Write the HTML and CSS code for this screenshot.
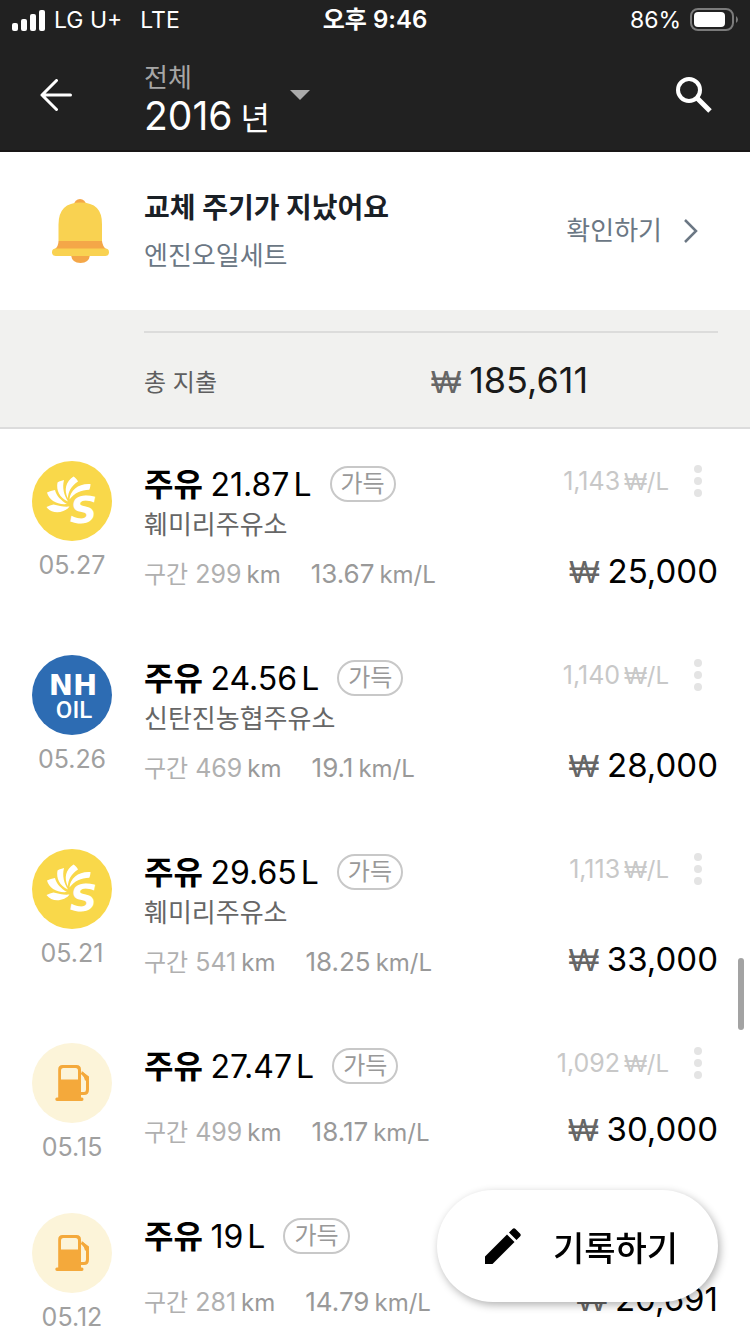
FILE: index.html
```html
<!DOCTYPE html>
<html lang="ko">
<head>
  <meta charset="UTF-8">
  <meta name="viewport" content="width=device-width, initial-scale=1.0">
  <title>2016년 주유 기록</title>
  <link rel="stylesheet" href="styles.css">
</head>
<body>
  <svg class="symbols" aria-hidden="true">
    <symbol id="logo-sk" viewBox="0 0 80 80">
      <circle cx="40" cy="40" r="40" fill="#f9d84a"/>
      <g fill="#fff">
        <path d="M14.500 46C17 45 19 44 21.500 43.500C27 45 32 46 37.500 45.500C33 52 20 54 14.500 46Z"/>
        <path d="M15 31.500C17.500 30.500 20 29.500 23 29C24.500 35 29 39.500 35 43C25 44 17 39 15 31.500Z"/>
        <path d="M25.500 21.500C27.500 20 30 19.500 32 19C30 27 32 34 36 40.500C27.500 37 24 29 25.500 21.500Z"/>
        <path d="M41.500 15.500C43.500 16.500 45 18.500 46 20.500C39 25 36 31 36 37.500C31.500 29 34 20 41.500 15.500Z"/>
        <path d="M58.500 23C58.500 25 58 27 57.300 28.800C49 29 42.500 32 37.500 38.500C38 29 47 22 58.500 23Z"/>
      </g>
    </symbol>
    <symbol id="logo-pump" viewBox="0 0 80 80">
      <circle cx="40" cy="40" r="40" fill="#fcf4d9"/>
      <path d="M30.500 22H44.500Q49 22 49 26.500V54.500H50Q51.500 54.500 51.500 56.200T50 58H25Q23.300 58 23.300 56.200T25 54.500H26.200V26.500Q26.200 22 30.500 22Z" fill="#f4a93b"/>
      <path d="M31.500 25H43.500Q46 25 46 27.500V36.500H29V27.500Q29 25 31.500 25Z" fill="#fcf4d9"/>
      <path d="M49.500 29.500L54 34Q55.500 35.500 55.500 38V46.500Q55.500 50.500 52 50.500H49" fill="none" stroke="#f4a93b" stroke-width="3"/>
      <path d="M49.500 28L57 33.500V37.500H53L51.500 33Z" fill="#f4a93b"/>
    </symbol>
    <symbol id="icon-dots" viewBox="0 0 8 32">
      <circle cx="4" cy="4" r="4"/><circle cx="4" cy="16" r="4"/><circle cx="4" cy="28" r="4"/>
    </symbol>
  </svg>

  <div class="status-bar">
    <div class="carrier">
      <svg width="33" height="21" viewBox="0 0 33 21" fill="#fff" aria-hidden="true">
        <rect x="0" y="13" width="6" height="8" rx="2"/>
        <rect x="9" y="9" width="6" height="12" rx="2"/>
        <rect x="18" y="4" width="6" height="17" rx="2"/>
        <rect x="27" y="0" width="6" height="21" rx="2"/>
      </svg>
      <span>LG U+</span>
      <span class="network">LTE</span>
    </div>
    <div class="clock">오후 9:46</div>
    <div class="battery">
      <span>86%</span>
      <svg width="48" height="24" viewBox="0 0 48 24" aria-hidden="true">
        <rect x="1" y="1" width="42" height="21" rx="7" fill="none" stroke="#7b7b7b" stroke-width="2"/>
        <rect x="4" y="4" width="31" height="15" rx="4" fill="#fff"/>
        <path d="M46 8Q48 9.500 48 11.500T46 15Z" fill="#7b7b7b"/>
      </svg>
    </div>
  </div>

  <header class="app-bar">
    <button class="icon-btn" aria-label="뒤로">
      <svg width="32" height="32" viewBox="0 0 32 32" fill="none" stroke="#fff" stroke-width="3" stroke-linecap="round" stroke-linejoin="round">
        <path d="M16.500 1.500L2 16L16.500 30.500M2 16H30.500"/>
      </svg>
    </button>
    <button class="period">
      <span class="period-text">
        <span class="period-label">전체</span>
        <span class="period-year">2016<span class="year-unit">년</span></span>
      </span>
      <svg width="20" height="10" viewBox="0 0 20 10"><path d="M0 0H20L10 10Z" fill="#aaa"/></svg>
    </button>
    <button class="icon-btn search" aria-label="검색">
      <svg width="36" height="36" viewBox="0 0 36 36" fill="none" stroke="#fff">
        <circle cx="13" cy="13" r="11" stroke-width="4"/>
        <path d="M21 21L34 34" stroke-width="5"/>
      </svg>
    </button>
  </header>

  <section class="alert">
    <svg class="bell" width="57" height="66" viewBox="0 0 57 66" aria-hidden="true">
      <circle cx="28" cy="7" r="6" fill="#f4a748"/>
      <path d="M19 57H38Q37 65 28.500 65T19 57Z" fill="#f4a748"/>
      <path d="M6.500 26.500Q6.500 4.500 28.500 4.500T50 26.500V43H6.500Z" fill="#f9d251"/>
      <path d="M6.500 43H50Q50.500 48 54 51H3Q6.500 48 6.500 43Z" fill="#f4a748"/>
      <rect x="0" y="50.500" width="57" height="7.500" rx="3.700" fill="#f9d251"/>
    </svg>
    <div class="alert-text">
      <h2>교체 주기가 지났어요</h2>
      <p>엔진오일세트</p>
    </div>
    <a class="alert-link" href="#">확인하기
      <svg width="14" height="24" viewBox="0 0 14 24" fill="none" stroke="#6b7784" stroke-width="2.500"><path d="M1 1L12 12L1 23"/></svg>
    </a>
  </section>

  <section class="total">
    <div class="total-row">
      <span class="total-label">총 지출</span>
      <span class="total-amount"><span class="won">₩</span>185,611</span>
    </div>
  </section>

  <main class="records">
    <article class="record">
      <div class="side">
        <svg class="logo" viewBox="0 0 80 80" role="img" aria-label="SK"><use href="#logo-sk"/><text class="sk-mark" x="38" y="62">S</text></svg>
        <time datetime="2016-05-27">05.27</time>
      </div>
      <div class="detail">
        <div class="top">
          <h3>주유 <span class="volume">21.87<span class="liter">L</span></span></h3>
          <span class="full">가득</span>
          <div class="top-right">
            <span class="unit-price">1,143<span class="per"><span class="won-sign">₩</span>/L</span></span>
            <button class="more" aria-label="더보기"><svg width="8" height="32"><use href="#icon-dots"/></svg></button>
          </div>
        </div>
        <p class="station">훼미리주유소</p>
        <div class="bottom">
          <span class="distance"><span class="label">구간</span> 299<span class="unit">km</span></span>
          <span class="economy">13.67<span class="unit">km/L</span></span>
          <span class="price"><span class="won">₩</span>25,000</span>
        </div>
      </div>
    </article>

    <article class="record">
      <div class="side">
        <svg class="logo" viewBox="0 0 80 80" role="img" aria-label="NH OIL">
          <circle cx="40" cy="40" r="40" fill="#2d6cb3"/>
          <text class="nh-mark" x="41" y="40">NH</text>
          <text class="nh-oil" x="42" y="63">OIL</text>
        </svg>
        <time datetime="2016-05-26">05.26</time>
      </div>
      <div class="detail">
        <div class="top">
          <h3>주유 <span class="volume">24.56<span class="liter">L</span></span></h3>
          <span class="full">가득</span>
          <div class="top-right">
            <span class="unit-price">1,140<span class="per"><span class="won-sign">₩</span>/L</span></span>
            <button class="more" aria-label="더보기"><svg width="8" height="32"><use href="#icon-dots"/></svg></button>
          </div>
        </div>
        <p class="station">신탄진농협주유소</p>
        <div class="bottom">
          <span class="distance"><span class="label">구간</span> 469<span class="unit">km</span></span>
          <span class="economy">19.1<span class="unit">km/L</span></span>
          <span class="price"><span class="won">₩</span>28,000</span>
        </div>
      </div>
    </article>

    <article class="record">
      <div class="side">
        <svg class="logo" viewBox="0 0 80 80" role="img" aria-label="SK"><use href="#logo-sk"/><text class="sk-mark" x="38" y="62">S</text></svg>
        <time datetime="2016-05-21">05.21</time>
      </div>
      <div class="detail">
        <div class="top">
          <h3>주유 <span class="volume">29.65<span class="liter">L</span></span></h3>
          <span class="full">가득</span>
          <div class="top-right">
            <span class="unit-price">1,113<span class="per"><span class="won-sign">₩</span>/L</span></span>
            <button class="more" aria-label="더보기"><svg width="8" height="32"><use href="#icon-dots"/></svg></button>
          </div>
        </div>
        <p class="station">훼미리주유소</p>
        <div class="bottom">
          <span class="distance"><span class="label">구간</span> 541<span class="unit">km</span></span>
          <span class="economy">18.25<span class="unit">km/L</span></span>
          <span class="price"><span class="won">₩</span>33,000</span>
        </div>
      </div>
    </article>

    <article class="record">
      <div class="side">
        <svg class="logo" role="img" aria-label="주유소"><use href="#logo-pump"/></svg>
        <time datetime="2016-05-15">05.15</time>
      </div>
      <div class="detail">
        <div class="top">
          <h3>주유 <span class="volume">27.47<span class="liter">L</span></span></h3>
          <span class="full">가득</span>
          <div class="top-right">
            <span class="unit-price">1,092<span class="per"><span class="won-sign">₩</span>/L</span></span>
            <button class="more" aria-label="더보기"><svg width="8" height="32"><use href="#icon-dots"/></svg></button>
          </div>
        </div>
        <div class="bottom">
          <span class="distance"><span class="label">구간</span> 499<span class="unit">km</span></span>
          <span class="economy">18.17<span class="unit">km/L</span></span>
          <span class="price"><span class="won">₩</span>30,000</span>
        </div>
      </div>
    </article>

    <article class="record">
      <div class="side">
        <svg class="logo" role="img" aria-label="주유소"><use href="#logo-pump"/></svg>
        <time datetime="2016-05-12">05.12</time>
      </div>
      <div class="detail">
        <div class="top">
          <h3>주유 <span class="volume">19<span class="liter">L</span></span></h3>
          <span class="full">가득</span>
        </div>
        <div class="bottom">
          <span class="distance"><span class="label">구간</span> 281<span class="unit">km</span></span>
          <span class="economy">14.79<span class="unit">km/L</span></span>
          <span class="price"><span class="won">₩</span>20,691</span>
        </div>
      </div>
    </article>
  </main>

  <div class="scroll-thumb"></div>

  <button class="write-btn">
    <svg width="36" height="36" viewBox="0 0 36 36" aria-hidden="true">
      <path d="M0 28.500L22 6.500L29.500 14L7.500 36H0ZM24 4.500L27.500 1Q29 -.5 30.500 1L35 5.500Q36.500 7 35 8.500L31.500 12Z"/>
    </svg>
    기록하기
  </button>
</body>
</html>
```

FILE: styles.css
```css
* {
  box-sizing: border-box;
}
body {
  margin: 0;
  height: 100vh;
  display: flex;
  flex-direction: column;
  overflow: hidden;
  background: #fff;
  color: #000;
  font-family: Inter, "Noto Sans CJK KR", sans-serif;
  font-size: 26px;
}
h2, h3, p {
  margin: 0;
}
button {
  padding: 0;
  border: none;
  background: none;
  color: inherit;
  font: inherit;
  cursor: pointer;
}
svg {
  display: block;
  flex-shrink: 0;
}
.symbols {
  position: absolute;
  width: 0;
  height: 0;
}

/* Status bar */
.status-bar {
  display: grid;
  grid-template-columns: 1fr auto 1fr;
  align-items: center;
  flex-shrink: 0;
  height: 40px;
  padding: 0 12px;
  background: #212121;
  color: #fff;
  font-size: 23px;
}
.carrier, .battery {
  display: flex;
  align-items: center;
  gap: 9px;
}
.network {
  margin-left: 9px;
}
.clock {
  font-size: 24px;
  font-weight: 600;
  line-height: 36px;
}
.battery {
  justify-content: flex-end;
}

/* App bar */
.app-bar {
  display: flex;
  align-items: center;
  flex-shrink: 0;
  height: 112px;
  padding: 0 38px 0 40px;
  border-bottom: 2px solid #191617;
  background: #212121;
  color: #fff;
}
.icon-btn {
  width: 36px;
}
.period {
  display: flex;
  align-items: center;
  gap: 20px;
  margin-left: 68px;
  text-align: left;
}
.period-text {
  display: flex;
  flex-direction: column;
  padding-top: 12px;
}
.period-label {
  color: #a6a6a6;
  font-size: 26px;
  line-height: 32px;
}
.period-year {
  font-size: 39px;
  line-height: 44px;
}
.year-unit {
  margin-left: 8px;
  font-size: 32px;
}
.search {
  margin-left: auto;
}

/* Replacement alert */
.alert {
  display: flex;
  align-items: center;
  flex-shrink: 0;
  height: 158px;
  padding: 0 52px;
  color: #6b7784;
}
.alert-text {
  margin-left: 35px;
  padding-top: 2px;
}
.alert-text h2 {
  color: #1a2026;
  font-size: 28px;
  font-weight: 700;
  line-height: 48px;
}
.alert-text p {
  line-height: 48px;
}
.alert-link {
  display: flex;
  align-items: center;
  gap: 22px;
  margin-left: auto;
  color: inherit;
  line-height: 36px;
  text-decoration: none;
}

/* Total */
.total {
  flex-shrink: 0;
  padding: 21px 32px 0 144px;
  border-bottom: 2px solid #dcdcdc;
  background: #f1f1ef;
}
.total-row {
  display: grid;
  grid-template-columns: 1fr 1fr;
  align-items: center;
  height: 96px;
  border-top: 2px solid #dcdcdb;
}
.total-label {
  color: #5f5f5f;
  font-size: 24px;
}
.total-amount {
  color: #1a1a1a;
  font-size: 36px;
}
.won, .won-sign {
  font-family: "Liberation Sans", Arial, sans-serif;
}
.won {
  margin-right: 8px;
  color: #666;
  font-size: 32px;
}

/* Records */
.records {
  flex: 1;
  min-height: 0;
  overflow-y: auto;
  scrollbar-width: none;
}
.record {
  display: flex;
  gap: 32px;
  padding: 32px 32px 18px;
}
.side {
  display: flex;
  flex-direction: column;
  align-items: center;
  gap: 8px;
  width: 80px;
}
.side time {
  color: #a0a0a0;
  font-size: 25px;
  line-height: 32px;
}
.logo {
  width: 80px;
  height: 80px;
}
.sk-mark {
  fill: #fff;
  font-family: "DejaVu Sans", sans-serif;
  font-size: 38px;
  font-style: italic;
  font-weight: 700;
}
.nh-mark, .nh-oil {
  fill: #fff;
  text-anchor: middle;
}
.nh-mark {
  font-family: "DejaVu Sans", sans-serif;
  font-size: 29px;
  font-weight: 700;
}
.nh-oil {
  font-family: Roboto, sans-serif;
  font-size: 24px;
  font-weight: 500;
}
.detail {
  flex: 1;
  padding-bottom: 14px;
}
.top {
  display: flex;
  align-items: center;
  height: 46px;
}
.top h3 {
  padding-bottom: 4px;
  font-size: 32px;
  font-weight: 700;
}
.volume {
  font-weight: 400;
}
.liter {
  margin-left: 4px;
}
.full {
  height: 36px;
  margin-left: 18px;
  padding: 0 9px;
  border: 2px solid #c8c8c8;
  border-radius: 18px;
  color: #999;
  font-size: 24px;
  line-height: 32px;
}
.top-right {
  display: flex;
  align-items: center;
  gap: 25px;
  margin-left: auto;
  padding: 0 16px 6px 0;
}
.unit-price {
  color: #c8c8c8;
  font-size: 25px;
  line-height: 32px;
}
.per {
  margin-left: 4px;
  font-size: 24px;
}
.more {
  width: 8px;
  fill: #e4e4e4;
}
.station {
  color: #666;
  line-height: 36px;
}
.bottom {
  display: flex;
  align-items: baseline;
  height: 36px;
  margin-top: 24px;
  color: #999;
  line-height: 32px;
}
.station + .bottom {
  margin-top: 12px;
}
.distance {
  margin-right: 30px;
  color: #b0b0b0;
  font-size: 25px;
}
.label, .unit {
  font-size: 24px;
}
.unit {
  margin-left: 5px;
  color: #999;
}
.price {
  margin-left: auto;
  color: #000;
  font-size: 33px;
}

/* Floating parts */
.scroll-thumb {
  position: fixed;
  top: 958px;
  right: 6px;
  width: 6px;
  height: 72px;
  border-radius: 3px;
  background: #a3a3a3;
}
.write-btn {
  position: fixed;
  right: 32px;
  bottom: 32px;
  display: flex;
  align-items: center;
  gap: 32px;
  height: 112px;
  padding: 0 40px 0 48px;
  border-radius: 56px;
  background: #fff;
  box-shadow: 2px 3px 8px rgba(0, 0, 0, 0.3);
  font-size: 34px;
  font-weight: 500;
}
```
